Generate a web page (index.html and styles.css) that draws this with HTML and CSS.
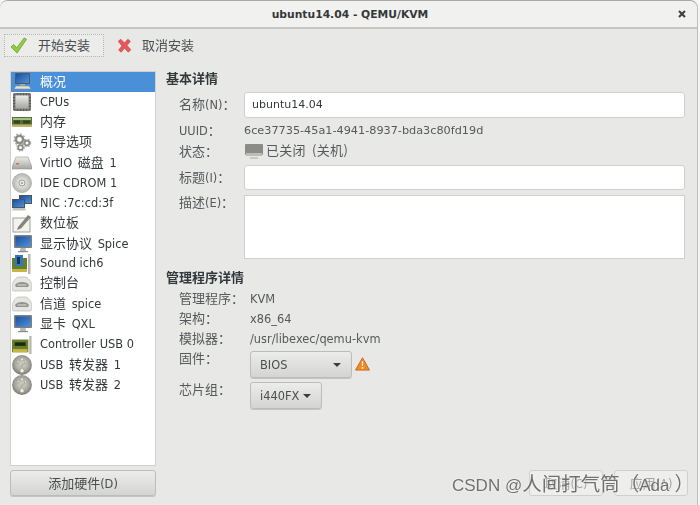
FILE: index.html
```html
<!DOCTYPE html>
<html lang="zh">
<head>
<meta charset="utf-8">
<title>ubuntu14.04 - QEMU/KVM</title>
<link rel="stylesheet" href="styles.css">
</head>
<body>
<svg class="defs" width="0" height="0" aria-hidden="true">
  <defs>
    <linearGradient id="scr" x1="0" y1="0" x2="1" y2="1"><stop offset="0" stop-color="#1c4f9a"/><stop offset="1" stop-color="#4b93e0"/></linearGradient>
    <linearGradient id="gry" x1="0" y1="0" x2="0" y2="1"><stop offset="0" stop-color="#ececea"/><stop offset="1" stop-color="#a4a4a0"/></linearGradient>
    <radialGradient id="usb" cx=".5" cy=".45"><stop offset="0" stop-color="#dcdcd6"/><stop offset=".7" stop-color="#a8a8a0"/><stop offset="1" stop-color="#84847c"/></radialGradient>
    <radialGradient id="cdg"><stop offset="0" stop-color="#f6f6f4"/><stop offset="1" stop-color="#c8c8c4"/></radialGradient>
    <symbol id="i-monitor" viewBox="0 0 20 20">
      <rect x="3" y="1" width="15" height="11" fill="#55585a" rx="1"/>
      <rect x="4" y="2" width="13" height="9" fill="url(#scr)"/>
      <path d="M8 12h5v2H8z" fill="#aaa"/>
      <path d="M4 14h13l2 3H2z" fill="#e2e2de" stroke="#8a8a86" stroke-width=".6"/>
    </symbol>
    <symbol id="i-display" viewBox="0 0 20 20">
      <rect x="2" y="1" width="18" height="13" fill="#7c8082" rx="1"/>
      <rect x="3.500" y="2.500" width="15" height="10" fill="url(#scr)"/>
      <path d="M8.500 14h5l.7 3h-6.400z" fill="#b9b9b5"/>
      <path d="M6 17h10v1.200H6z" fill="#8a8a86"/>
    </symbol>
    <symbol id="i-cpu" viewBox="0 0 20 20">
      <rect x="1" y="1" width="18" height="18" rx="2" fill="#5c5c58"/>
      <path d="M1 4h18M1 7h18M1 10h18M1 13h18M1 16h18M4 1v18M7 1v18M10 1v18M13 1v18M16 1v18" stroke="#a8a8a2" stroke-width=".8"/>
      <rect x="3.500" y="3.500" width="13" height="13" rx="1" fill="url(#gry)"/>
    </symbol>
    <symbol id="i-ram" viewBox="0 0 20 20">
      <rect x="0" y="5" width="20" height="10" fill="#56703a"/>
      <rect x="1" y="6" width="18" height="2" fill="#a6c080"/>
      <path d="M2 8.500h6v3H2zM11 8.500h7v3h-7z" fill="#39421f"/>
      <path d="M0 12.500h20V15H0z" fill="#c2b468"/>
    </symbol>
    <symbol id="i-gears" viewBox="0 0 20 20">
      <circle cx="7.500" cy="6.500" r="3.600" fill="none" stroke="#8a8a82" stroke-width="2.400"/>
      <circle cx="7.500" cy="6.500" r="5.400" fill="none" stroke="#a9a9a1" stroke-width="1.600" stroke-dasharray="1.800 1.800"/>
      <circle cx="15" cy="10" r="2.400" fill="none" stroke="#8a8a82" stroke-width="1.800"/>
      <circle cx="15" cy="10" r="3.700" fill="none" stroke="#a9a9a1" stroke-width="1.200" stroke-dasharray="1.500 1.500"/>
      <circle cx="8.500" cy="14.500" r="2.400" fill="none" stroke="#8a8a82" stroke-width="1.800"/>
      <circle cx="8.500" cy="14.500" r="3.700" fill="none" stroke="#a9a9a1" stroke-width="1.200" stroke-dasharray="1.500 1.500"/>
    </symbol>
    <symbol id="i-disk" viewBox="0 0 20 20">
      <path d="M4 4h12l4 10v2H0v-2z" fill="url(#gry)" stroke="#97978f" stroke-width=".6"/>
      <rect x="4" y="10" width="3" height="1.500" fill="#d9762b"/>
    </symbol>
    <symbol id="i-cd" viewBox="0 0 20 20">
      <circle cx="10" cy="10" r="9.500" fill="#c2c2bd" stroke="#8f8f89" stroke-width=".6"/>
      <circle cx="10" cy="10" r="7" fill="url(#cdg)"/>
      <circle cx="10" cy="10" r="3" fill="#ecece9" stroke="#8a8a85" stroke-width=".8"/>
      <circle cx="10" cy="10" r="1.100" fill="#9a9a95"/>
    </symbol>
    <symbol id="i-nic" viewBox="0 0 20 20">
      <rect x="7" y="2" width="13" height="9" fill="#4d5358"/>
      <rect x="8" y="3" width="11" height="7" fill="url(#scr)"/>
      <rect x="0" y="6" width="13" height="9" fill="#4d5358"/>
      <rect x="1" y="7" width="11" height="7" fill="url(#scr)"/>
      <path d="M1 15h12l1 2.500H0z" fill="#c4c4be"/>
    </symbol>
    <symbol id="i-tablet" viewBox="0 0 20 20">
      <rect x="1" y="5" width="17" height="14" fill="#f2f2ee" stroke="#a2a29c"/>
      <path d="M6 14 16 2l3 2L9 15.500l-4 1.500z" fill="#85857f"/>
    </symbol>
    <symbol id="i-sound" viewBox="0 0 20 20">
      <path d="M0 4h15v14H0z" fill="#66802a"/>
      <path d="M3 1h8v11H3z" fill="#3577bd"/>
      <path d="M5 3h3v7H5z" fill="#16355e"/>
      <path d="M0 15h15v3H0z" fill="#c7b548"/>
      <path d="M16 0h2.500v20H16z" fill="#b9b9b2"/>
    </symbol>
    <symbol id="i-serial" viewBox="0 0 20 20">
      <path d="M6 3h8c3 1 6 6 6 9v3c0 1-1 2-2 2H2c-1 0-2-1-2-2v-3c0-3 3-8 6-9z" fill="#e4e4e0" stroke="#b0b0aa" stroke-width=".6"/>
      <path d="M3 11c2-4 12-4 14 0l-1 2H4z" fill="#93938e"/>
      <path d="M5.500 11h9" stroke="#dededa"/>
    </symbol>
    <symbol id="i-controller" viewBox="0 0 22 20">
      <path d="M0 4h18v14H0z" fill="#66802a"/>
      <rect x="3" y="7" width="12" height="4" fill="#1d2a12"/>
      <path d="M1 14.500h16V18H1z" fill="#c7b548"/>
      <path d="M19 0h2.500v20H19z" fill="#b7b7b0"/>
    </symbol>
    <symbol id="i-usb" viewBox="0 0 20 20">
      <circle cx="10" cy="10" r="9.900" fill="url(#usb)"/>
      <path d="M10 2 8.300 5.300h1.100v8.600a2 2 0 1 0 1.200 0V5.300h1.100zM9.600 11.200 6.200 9V7.400h.8V5.800H5v1.600h.4v2l4.200 3zM10.400 10.300l3.400-2V7.200h.8v-1.600h-2v1.600h.4v.7l-2.600 1.500z" fill="#f6f3e2" stroke="#66665e" stroke-width=".3"/>
    </symbol>
  </defs>
</svg>
<div class="window">
  <header class="titlebar">
    <span class="title">ubuntu14.04 - QEMU/KVM</span>
    <svg class="close" viewBox="0 0 8 8"><path d="M1 1l6 6M7 1 1 7" stroke="#3a3e40" stroke-width="2"/></svg>
  </header>
  <div class="toolbar">
    <button class="tool tool-focus" type="button">
      <svg class="tool-icon" viewBox="0 0 18 18"><path d="M1 10.500 4 8l3 3.500L15 1l2.500 1.500L7.500 17z" fill="#93cb42" stroke="#679f2e" stroke-width=".8"/></svg>
      <span class="zh">开始安装</span>
    </button>
    <button class="tool tool-cancel" type="button">
      <svg class="tool-icon-x" viewBox="0 0 18 18"><path d="M1.500 4 4.500 1.500 9 6l4-4.500 3 2.500-4 5 4.500 5-3 3L9 12l-4 5-3-2.500L6 9.500z" fill="#e8575a" stroke="#c43c3e" stroke-width=".8"/></svg>
      <span class="zh">取消安装</span>
    </button>
  </div>
  <div class="content">
    <aside class="sidebar">
      <ul class="hw-list">
        <li class="hw hw-active"><svg class="hw-icon"><use href="#i-monitor"/></svg><span class="hw-label zh">概况</span></li>
        <li class="hw"><svg class="hw-icon"><use href="#i-cpu"/></svg><span class="hw-label">CPUs</span></li>
        <li class="hw"><svg class="hw-icon"><use href="#i-ram"/></svg><span class="hw-label zh">内存</span></li>
        <li class="hw"><svg class="hw-icon"><use href="#i-gears"/></svg><span class="hw-label zh">引导选项</span></li>
        <li class="hw"><svg class="hw-icon"><use href="#i-disk"/></svg><span class="hw-label mix">VirtIO <span class="zh">磁盘</span> 1</span></li>
        <li class="hw"><svg class="hw-icon"><use href="#i-cd"/></svg><span class="hw-label">IDE CDROM 1</span></li>
        <li class="hw"><svg class="hw-icon"><use href="#i-nic"/></svg><span class="hw-label">NIC :7c:cd:3f</span></li>
        <li class="hw"><svg class="hw-icon"><use href="#i-tablet"/></svg><span class="hw-label zh">数位板</span></li>
        <li class="hw"><svg class="hw-icon"><use href="#i-display"/></svg><span class="hw-label mix"><span class="zh">显示协议</span> Spice</span></li>
        <li class="hw"><svg class="hw-icon"><use href="#i-sound"/></svg><span class="hw-label">Sound ich6</span></li>
        <li class="hw"><svg class="hw-icon"><use href="#i-serial"/></svg><span class="hw-label zh">控制台</span></li>
        <li class="hw"><svg class="hw-icon"><use href="#i-serial"/></svg><span class="hw-label mix"><span class="zh">信道</span> spice</span></li>
        <li class="hw"><svg class="hw-icon"><use href="#i-display"/></svg><span class="hw-label mix"><span class="zh">显卡</span> QXL</span></li>
        <li class="hw"><svg class="hw-icon"><use href="#i-controller"/></svg><span class="hw-label">Controller USB 0</span></li>
        <li class="hw"><svg class="hw-icon"><use href="#i-usb"/></svg><span class="hw-label mix">USB <span class="zh">转发器</span> 1</span></li>
        <li class="hw"><svg class="hw-icon"><use href="#i-usb"/></svg><span class="hw-label mix">USB <span class="zh">转发器</span> 2</span></li>
      </ul>
      <button class="btn add-btn" type="button"><span class="zh">添加硬件</span>(D)</button>
    </aside>
    <main class="details">
      <h2 class="section-title">基本详情</h2>
      <div class="form basic">
        <label class="lbl lbl-up"><span class="zh">名称</span>(N)<span class="zh colon">：</span></label>
        <div class="field field-name">ubuntu14.04</div>
        <span class="lbl">UUID<span class="zh colon">：</span></span>
        <span class="val uuid">6ce37735-45a1-4941-8937-bda3c80fd19d</span>
        <span class="lbl zh lbl-status">状态<span class="colon">：</span></span>
        <span class="val status">
          <svg class="status-icon" viewBox="0 0 20 18"><rect x="1" y="1" width="18" height="11" rx="1" fill="#8b8b88"/><path d="M2 10h16v3H2z" fill="#bcbcb8"/><path d="M6 14h8v2H6z" fill="#c9c9c6"/></svg>
          <span class="zh status-text">已关闭 (关机)</span>
        </span>
        <label class="lbl"><span class="zh">标题</span>(I)<span class="zh colon">：</span></label>
        <div class="field field-title"></div>
        <label class="lbl lbl-top"><span class="zh">描述</span>(E)<span class="zh colon">：</span></label>
        <div class="field area"></div>
      </div>
      <h2 class="section-title second">管理程序详情</h2>
      <div class="form hyper">
        <span class="lbl zh">管理程序<span class="colon">：</span></span><span class="val">KVM</span>
        <span class="lbl zh">架构<span class="colon">：</span></span><span class="val">x86_64</span>
        <span class="lbl zh">模拟器<span class="colon">：</span></span><span class="val">/usr/libexec/qemu-kvm</span>
        <span class="lbl zh lbl-firmware">固件<span class="colon">：</span></span>
        <div class="combo-row">
          <button class="btn combo combo-wide" type="button">BIOS<i class="caret"></i></button>
          <svg class="warn" viewBox="0 0 16 15"><path d="M8 .8 15.500 14H.500z" fill="#f08a24" stroke="#c9651a" stroke-linejoin="round"/><path d="M7.200 4.500h1.600l-.3 5.200h-1zM7.200 10.800h1.600v1.700H7.200z" fill="#fff6e0"/></svg>
        </div>
        <span class="lbl zh lbl-chipset">芯片组<span class="colon">：</span></span>
        <div class="combo-row combo-row-next">
          <button class="btn combo" type="button">i440FX<i class="caret"></i></button>
        </div>
      </div>
      <div class="actions">
        <button class="btn action" type="button"><span class="zh">取消</span>(C)</button>
        <button class="btn action" type="button"><span class="zh">应用</span>(A)</button>
      </div>
    </main>
  </div>
  <div class="watermark">CSDN @<span class="wm-zh">人间打气筒（</span>Ada<span class="wm-zh wm-end">）</span></div>
</div>
</body>
</html>
```
FILE: styles.css
```css
* { box-sizing: border-box; }
html, body { margin: 0; padding: 0; }
body {
  width: 700px;
  height: 505px;
  overflow: hidden;
  background: #f6f6f6;
  font-family: "DejaVu Sans", "Noto Sans CJK SC", sans-serif;
  font-size: 11.400px;
  color: #2e3436;
}
.defs { position: absolute; }
.zh { font-family: "Noto Sans CJK SC", sans-serif; font-size: 13px; line-height: 1; }
.colon { font-family: "Noto Sans CJK TC", sans-serif; font-size: 13px; line-height: 1; }
.window {
  position: relative;
  display: flex;
  flex-direction: column;
  width: 698px;
  height: 505px;
  background: #e8e8e7;
  border-top: 1px solid #a8a8a6;
  border-right: 1px solid #bdbdbb;
  border-radius: 8px 8px 0 0;
  filter: blur(.35px);
}
.titlebar {
  height: 28px;
  flex: none;
  display: grid;
  grid-template-columns: 1fr auto 1fr;
  align-items: center;
  padding: 0 11px 0 14px;
  background: #f1f1f0;
  border-bottom: 2px solid #c6c6c4;
  border-radius: 8px 8px 0 0;
}
.title {
  grid-column: 2;
  font-weight: bold;
  font-size: 10.750px;
  color: #33383a;
}
.close { grid-column: 3; justify-self: end; width: 8px; height: 8px; }
.toolbar {
  display: flex;
  align-items: stretch;
  flex: none;
  height: 28px;
  padding: 5px 0 0 4px;
  margin-bottom: 14px;
}
.tool {
  display: flex;
  align-items: center;
  width: 100px;
  height: 23px;
  background: transparent;
  border: 1px solid transparent;
  font: inherit;
  color: #4a4e50;
}
.tool .zh { margin-bottom: 2px; }
.tool-focus {
  gap: 11px;
  padding: 0 0 0 5px;
  border: 1px dotted #b5b5b3;
  background: #ececeb;
}
.tool-cancel {
  gap: 10px;
  margin-left: 6px;
  padding: 0 0 0 6px;
}
.tool-icon { width: 17px; height: 17px; flex: none; }
.tool-icon-x { width: 15px; height: 15px; flex: none; }
.content {
  flex: 1;
  display: flex;
  min-height: 0;
  padding: 0 9px 9px 10px;
  gap: 10px;
}
.sidebar {
  width: 146px;
  flex: none;
  display: flex;
  flex-direction: column;
  gap: 4px;
}
.hw-list {
  flex: 1;
  list-style: none;
  margin: 0;
  padding: 0;
  background: #fff;
  border: 1px solid #d0d0ce;
}
.hw {
  display: flex;
  align-items: center;
  gap: 8px;
  height: 20.200px;
  padding-left: 1px;
  color: #33383a;
  white-space: nowrap;
}
.hw-label { line-height: 15px; }
.hw-label.mix { word-spacing: 2px; }
.hw-label.zh { margin-bottom: 4px; }
.hw-active { background: #4a90d9; color: #fff; }
.hw-icon { width: 20px; height: 20px; flex: none; }
.btn {
  background: linear-gradient(#ececeb, #d4d4d2);
  border: 1px solid #bcbcba;
  border-radius: 3px;
  font: inherit;
  color: #4a4e50;
  box-shadow: 0 1px 0 #c4c4c2;
}
.add-btn { height: 26px; flex: none; }
.details {
  flex: 1;
  min-width: 0;
  display: flex;
  flex-direction: column;
}
.section-title {
  margin: 0;
  font-family: "Noto Sans CJK SC", sans-serif;
  font-size: 13px;
  line-height: 14px;
  font-weight: bold;
  color: #33383a;
}
.section-title.second { margin-top: 11px; }
.form {
  display: grid;
  align-items: center;
  padding-left: 13px;
}
.basic {
  grid-template-columns: 65px 441px;
  margin-top: 7px;
  row-gap: 5px;
}
.hyper {
  grid-template-columns: 71px auto;
  justify-content: start;
  margin-top: 5px;
}
.hyper > .lbl, .hyper > .val { height: 20px; line-height: 20px; }
.hyper > .lbl.zh { line-height: 17px; }
.lbl { color: #55595b; white-space: nowrap; line-height: 15px; }
.val { color: #55595b; white-space: nowrap; }
.basic > .lbl { height: 15px; }
.lbl-up { margin-bottom: 2px; }
.basic > .lbl-status { line-height: 10px; }
.basic > .val { height: 15px; line-height: 15px; }
.uuid { font-size: 11.250px; }
.basic > .status { height: 17px; display: flex; align-items: center; gap: 2px; }
.status-icon { width: 20px; height: 18px; flex: none; }
.status-text { margin-bottom: 4px; white-space: nowrap; word-spacing: 3px; letter-spacing: .3px; }
.field {
  line-height: 24px;
  padding: 0 7px;
  background: #fff;
  border: 1px solid #cfcfcd;
  border-radius: 3px;
  color: #33383a;
}
.field-name { height: 26px; font-size: 11px; }
.field-title { height: 25px; }
.area { height: 64px; border-radius: 0; }
.basic > .lbl-top { align-self: start; margin-top: 0; }
.hyper > .lbl-firmware { align-self: start; height: 15px; line-height: 15px; }
.hyper > .lbl-chipset { align-self: start; height: 15px; line-height: 15px; margin-top: 2px; }
.combo-row { display: flex; align-items: flex-start; gap: 3px; height: 29px; padding-top: 2px; }
.combo-row-next { height: 31px; padding-top: 4px; }
.combo {
  display: flex;
  align-items: center;
  justify-content: space-between;
  height: 27px;
  padding: 0 10px 0 9px;
  width: 72px;
}
.combo-wide { width: 102px; }
.caret {
  width: 0;
  height: 0;
  border-left: 4px solid transparent;
  border-right: 4px solid transparent;
  border-top: 4px solid #3a3e40;
}
.warn { width: 15px; height: 14px; flex: none; margin-top: 6px; }
.actions {
  margin-top: auto;
  display: flex;
  justify-content: flex-end;
  gap: 11px;
}
.action {
  width: 74px;
  height: 26px;
  background: #eeeeed;
  box-shadow: none;
  border-color: #cfcfcd;
  color: #a6a6a4;
}
.watermark {
  position: absolute;
  left: 452px;
  top: 472px;
  font-family: "Liberation Sans", "Noto Sans CJK SC", sans-serif;
  font-size: 17px;
  line-height: 24px;
  color: #707070;
  text-shadow: 0 0 2px #fff;
  white-space: nowrap;
}
.wm-zh { font-family: "Noto Sans CJK SC", sans-serif; font-size: 19.500px; line-height: 1; }
.wm-end { margin-left: 5px; }
```
